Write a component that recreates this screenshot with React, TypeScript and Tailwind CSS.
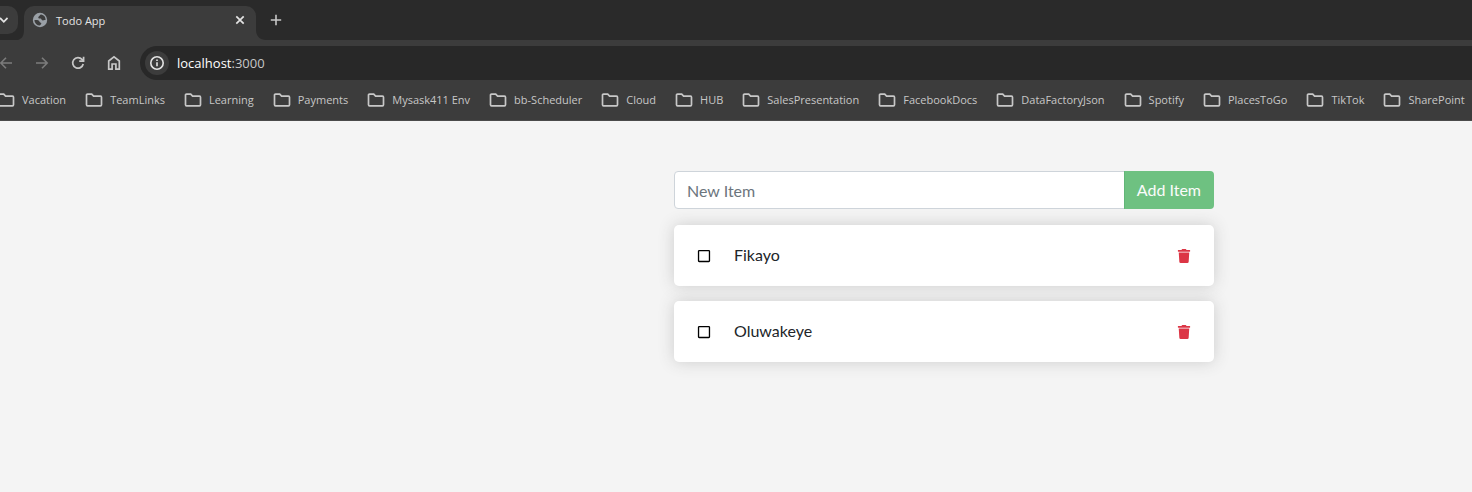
import { useState } from 'react';
import { FaRegSquare, FaTrash } from 'react-icons/fa';

const bookmarks = [
  'Vacation',
  'TeamLinks',
  'Learning',
  'Payments',
  'Mysask411 Env',
  'bb-Scheduler',
  'Cloud',
  'HUB',
  'SalesPresentation',
  'FacebookDocs',
  'DataFactoryJson',
  'Spotify',
  'PlacesToGo',
  'TikTok',
  'SharePoint',
];

const items = ['Fikayo', 'Oluwakeye'];

function FolderIcon() {
  return (
    <svg className="h-4 w-[18px] shrink-0" viewBox="0 0 18 16" fill="none" stroke="#c7c7c7" strokeWidth="1.7" aria-hidden="true">
      <path d="M1.5 3.2c0-.6.4-1 1-1h4.2l1.9 2h6.9c.6 0 1 .4 1 1v7.6c0 .6-.4 1-1 1h-13c-.6 0-1-.4-1-1z" />
    </svg>
  );
}

function GlobeIcon() {
  return (
    <svg className="size-4 shrink-0" viewBox="0 0 16 16" aria-hidden="true">
      <circle cx="8" cy="8" r="7.200" fill="#9aa0a6" />
      <path d="M9.200 2.600C7.800 2.900 7.600 4 6.800 4.600c-.8.500-.7 1.700.4 2 .9.200 1.900 0 2.300.8.400.9 1.300 1.200 2.200.9.800-.3 1.100-.300 1.900-.3a5.600 5.600 0 0 0-4.400-5.400z" fill="#3c3c3c" />
      <path d="M2.400 8c1.600 0 3.200-.1 4.200.5 1 .5.600 1.600 1.600 1.900 1 .200 1.400.9.900 1.700-.4.700-.9.700-1.100 1.500A5.600 5.600 0 0 1 2.400 8z" fill="#3c3c3c" />
    </svg>
  );
}

function TabStrip() {
  return (
    <div className="flex h-10 bg-[#2a2a2a]">
      <button type="button" aria-label="Search tabs" className="mt-[6px] flex h-7 w-[18px] items-center rounded-r-[10px] bg-[#3c3c3c]">
        <svg className="h-4 w-2" viewBox="0 0 8 16" fill="none" stroke="#e3e3e3" strokeWidth="1.8" aria-hidden="true">
          <path d="M0 6l3.800 3.800L7.600 6" />
        </svg>
      </button>
      <svg className="h-2.5 w-[6px] self-end" viewBox="0 0 6 10" aria-hidden="true">
        <path d="M6 0c0 6-2.500 9-6 10h6z" fill="#3c3c3c" />
      </svg>
      <div className="mt-[6px] flex w-[232px] items-center rounded-t-[10px] bg-[#3c3c3c] pr-2 pb-[6px] pl-2">
        <GlobeIcon />
        <span className="ml-2 flex-1 pt-0.5 text-[11px] text-[#e3e3e3]">Todo App</span>
        <button type="button" aria-label="Close tab" className="flex size-4 items-center justify-center">
          <svg className="size-4" viewBox="0 0 16 16" stroke="#e3e3e3" strokeWidth="1.7" aria-hidden="true">
            <path d="M4.300 4.300l7.400 7.400M11.700 4.300l-7.400 7.400" />
          </svg>
        </button>
      </div>
      <svg className="size-2.5 self-end" viewBox="0 0 10 10" aria-hidden="true">
        <path d="M0 0c0 6 4 10 10 10H0z" fill="#3c3c3c" />
      </svg>
      <button type="button" aria-label="New tab" className="flex h-10 w-5 items-center justify-center">
        <svg className="size-4" viewBox="0 0 16 16" stroke="#c7c7c7" strokeWidth="1.600" aria-hidden="true">
          <path d="M8 2.800v10.400M2.800 8h10.400" />
        </svg>
      </button>
    </div>
  );
}

function Toolbar() {
  return (
    <div className="flex h-[46px] items-center">
      <div className="flex gap-5 pr-[18px]">
        <button type="button" aria-label="Back" className="-ml-0.5">
          <svg className="size-4" viewBox="0 0 16 16" fill="none" stroke="#7c7c7c" strokeWidth="1.600" aria-hidden="true">
            <path d="M14 8H3M8 2.800L2.800 8 8 13.200" />
          </svg>
        </button>
        <button type="button" aria-label="Forward">
          <svg className="size-4" viewBox="0 0 16 16" fill="none" stroke="#7c7c7c" strokeWidth="1.600" aria-hidden="true">
            <path d="M2 8h11M8 2.800L13.200 8 8 13.200" />
          </svg>
        </button>
        <button type="button" aria-label="Reload">
          <svg className="size-4" viewBox="0 0 16 16" fill="none" stroke="#c7c7c7" strokeWidth="1.700" aria-hidden="true">
            <path d="M13.200 9A5.300 5.300 0 1 1 12 4.400l1 1.200" />
            <path d="M13.600 1.800v4.400H9.200" />
          </svg>
        </button>
        <button type="button" aria-label="Home">
          <svg className="size-4" viewBox="0 0 16 16" fill="none" stroke="#c7c7c7" strokeWidth="1.700" aria-hidden="true">
            <path d="M2.700 6L8 1.900 13.300 6v8.200H9.900V9H6.100v5.200H2.700z" />
          </svg>
        </button>
      </div>
      <div className="flex h-[34px] flex-1 items-center rounded-l-full bg-[#282828] pl-[5px]">
        <button type="button" aria-label="View site information" className="flex size-6 items-center justify-center rounded-full bg-[#3c3c3c]">
          <svg className="size-4" viewBox="0 0 16 16" fill="none" stroke="#e3e3e3" strokeWidth="1.600" aria-hidden="true">
            <circle cx="8" cy="8" r="6.200" />
            <path d="M8 7.200v4M8 4.500v1.600" />
          </svg>
        </button>
        <a href="http://localhost:3000" className="ml-2 pt-0.5 text-[13px] text-[#c7c7c7]">
          <span className="text-white">localhost</span>:3000
        </a>
      </div>
    </div>
  );
}

function BookmarksBar() {
  return (
    <nav aria-label="Bookmarks" className="flex h-[35px] items-center gap-[19px] overflow-hidden border-b border-[#4a4a4a] pb-[6px]">
      {bookmarks.map((name) => (
        <a key={name} href="#" className="flex shrink-0 items-center gap-[7px] text-[11px] whitespace-nowrap text-[#c7c7c7] first:-ml-[3px]">
          <FolderIcon />
          {name}
        </a>
      ))}
    </nav>
  );
}

export default function App() {
  const [text, setText] = useState('');

  return (
    <div className="min-h-screen bg-[#f4f4f4]">
      <header className="bg-[#3c3c3c] font-['Open_Sans',sans-serif]">
        <TabStrip />
        <Toolbar />
        <BookmarksBar />
      </header>
      <main className="flex justify-end pt-[50px] pr-[258px] font-['Lato',sans-serif] text-base text-[#212529]">
        <div className="flex w-full max-w-[540px] flex-col">
          <form className="mb-4 flex h-[38px]" onSubmit={(e) => e.preventDefault()}>
            <input
              aria-label="New item"
              placeholder="New Item"
              value={text}
              onChange={(e) => setText(e.target.value)}
              className="min-w-0 flex-1 rounded-l border border-[#ced4da] bg-white px-3 pt-0.5 outline-none placeholder:text-[#6c757d]"
            />
            <button type="submit" disabled={!text} className="-ml-px rounded-r bg-[#28a745] px-[13px] text-white disabled:opacity-65">
              Add Item
            </button>
          </form>
          <ul className="flex flex-col gap-[15px]">
            {items.map((item) => (
              <li key={item} className="flex h-[61px] items-center rounded-[5px] bg-white px-[22px] shadow-[0_0_16px_#ccc]">
                <button type="button" aria-label={`Mark ${item} as complete`} className="flex w-4 justify-center text-black">
                  <FaRegSquare className="size-[14px]" />
                </button>
                <span className="flex-1 pb-0.5 pl-[22px]">{item}</span>
                <button type="button" aria-label={`Remove ${item}`} className="flex w-4 justify-center text-[#dc3545]">
                  <FaTrash className="size-[14px]" />
                </button>
              </li>
            ))}
          </ul>
        </div>
      </main>
    </div>
  );
}
